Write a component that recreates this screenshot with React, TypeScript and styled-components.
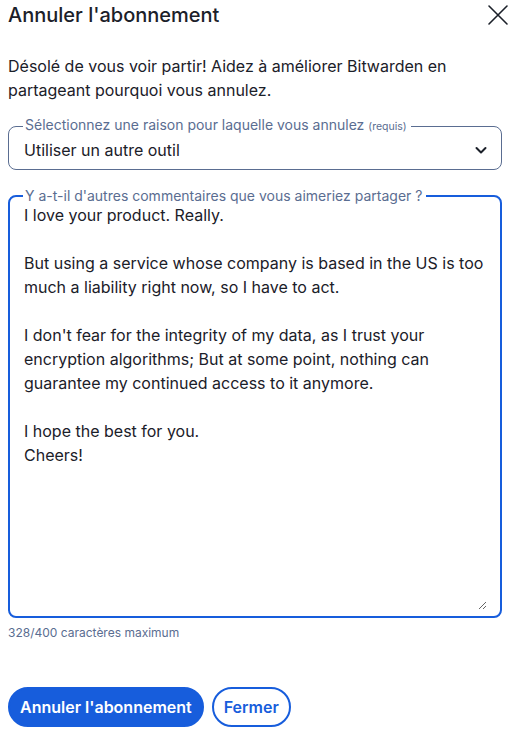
import React, { useEffect, useRef } from "react";
import styled, { createGlobalStyle } from "styled-components";

const GlobalStyle = createGlobalStyle`
  html, body {
    margin: 0;
    padding: 0;
    background: #ffffff;
  }
  body {
    font-family: Inter, "Noto Sans", sans-serif;
    color: #1b2029;
  }
`;

const Dialog = styled.div`
  width: 518px;
  box-sizing: border-box;
  padding: 0 16px 0 8px;
  display: flex;
  flex-direction: column;
`;

const Header = styled.div`
  display: flex;
  align-items: center;
  justify-content: space-between;
  height: 30px;
  margin-right: -8px;
`;

const Title = styled.h1`
  margin: 0;
  font-size: 20px;
  font-weight: 500;
  line-height: 28px;
  color: #1b2029;
`;

const CloseButton = styled.button`
  border: none;
  background: none;
  padding: 0;
  width: 24px;
  height: 24px;
  display: flex;
  align-items: center;
  justify-content: center;
  color: #1b2029;
  cursor: pointer;
`;

const Intro = styled.p`
  margin: 24px 0 15px;
  font-size: 16px;
  line-height: 24px;
`;

const Field = styled.fieldset<{ $focused?: boolean }>`
  margin: 0;
  min-width: 0;
  border: ${(p) => (p.$focused ? "2px solid #175ddc" : "1px solid #5a6d91")};
  border-radius: 8px;
  padding: ${(p) => (p.$focused ? "0 13px 6px 14px" : "0 14px 7px 15px")};
`;

const Legend = styled.legend`
  padding: 0 4px 0 2px;
  margin-left: -1px;
  font-size: 14px;
  line-height: 16px;
  color: #5a6d91;
  white-space: nowrap;
`;

const Required = styled.span`
  font-size: 10.5px;
`;

const SelectRow = styled.div`
  display: flex;
  align-items: center;
  justify-content: space-between;
  padding-top: 3px;
  font-size: 16px;
  line-height: 24px;
`;

const Chevron = styled.span`
  display: flex;
  margin-right: -1px;
  color: #1b2029;
`;

const Spacer = styled.div<{ $h: number }>`
  height: ${(p) => p.$h}px;
`;

const Comment = styled.textarea`
  display: block;
  width: 100%;
  box-sizing: border-box;
  height: 407px;
  margin-top: -1px;
  padding: 0;
  border: none;
  outline: none;
  resize: vertical;
  font-family: Inter, "Noto Sans", sans-serif;
  font-size: 16px;
  line-height: 24px;
  color: #1b2029;
  caret-color: #1b2029;
  background: transparent;
`;

const Hint = styled.div`
  margin-top: 7px;
  font-size: 12px;
  line-height: 16px;
  color: #5a6d91;
`;

const Actions = styled.div`
  display: flex;
  gap: 8px;
  margin-top: 46px;
`;

const Button = styled.button<{ $primary?: boolean }>`
  height: 40px;
  box-sizing: border-box;
  border-radius: 20px;
  border: 2px solid #175ddc;
  padding: 0 10px;
  font-family: Inter, "Noto Sans", sans-serif;
  font-size: 16px;
  font-weight: 600;
  background: ${(p) => (p.$primary ? "#175ddc" : "#ffffff")};
  color: ${(p) => (p.$primary ? "#ffffff" : "#175ddc")};
  cursor: pointer;
`;

const comment = `I love your product. Really.

But using a service whose company is based in the US is too much a liability right now, so I have to act.

I don't fear for the integrity of my data, as I trust your encryption algorithms; But at some point, nothing can guarantee my continued access to it anymore.

I hope the best for you.
Cheers!`;

export default function App() {
  const ref = useRef<HTMLTextAreaElement>(null);

  useEffect(() => {
    const el = ref.current;
    if (el) {
      el.focus();
      el.setSelectionRange(comment.length, comment.length);
    }
  }, []);

  return (
    <>
      <GlobalStyle />
      <Dialog>
        <Header>
          <Title>Annuler l'abonnement</Title>
          <CloseButton aria-label="Fermer">
            <svg width="22" height="22" viewBox="0 0 22 22" fill="none">
              <path d="M2 2L20 20M20 2L2 20" stroke="currentColor" strokeWidth="1.6" strokeLinecap="round" />
            </svg>
          </CloseButton>
        </Header>
        <Intro>
          Désolé de vous voir partir! Aidez à améliorer Bitwarden en partageant pourquoi vous annulez.
        </Intro>
        <Field>
          <Legend>
            Sélectionnez une raison pour laquelle vous annulez <Required>(requis)</Required>
          </Legend>
          <SelectRow>
            <span>Utiliser un autre outil</span>
            <Chevron>
              <svg width="14" height="14" viewBox="0 0 14 14" fill="none">
                <path d="M2.5 5L7 9.5L11.5 5" stroke="currentColor" strokeWidth="2" strokeLinecap="round" strokeLinejoin="round" />
              </svg>
            </Chevron>
          </SelectRow>
        </Field>
        <Spacer $h={18} />
        <Field $focused>
          <Legend>Y a-t-il d'autres commentaires que vous aimeriez partager ?</Legend>
          <Comment ref={ref} defaultValue={comment} maxLength={400} />
        </Field>
        <Hint>328/400 caractères maximum</Hint>
        <Actions>
          <Button $primary>Annuler l'abonnement</Button>
          <Button>Fermer</Button>
        </Actions>
      </Dialog>
    </>
  );
}
